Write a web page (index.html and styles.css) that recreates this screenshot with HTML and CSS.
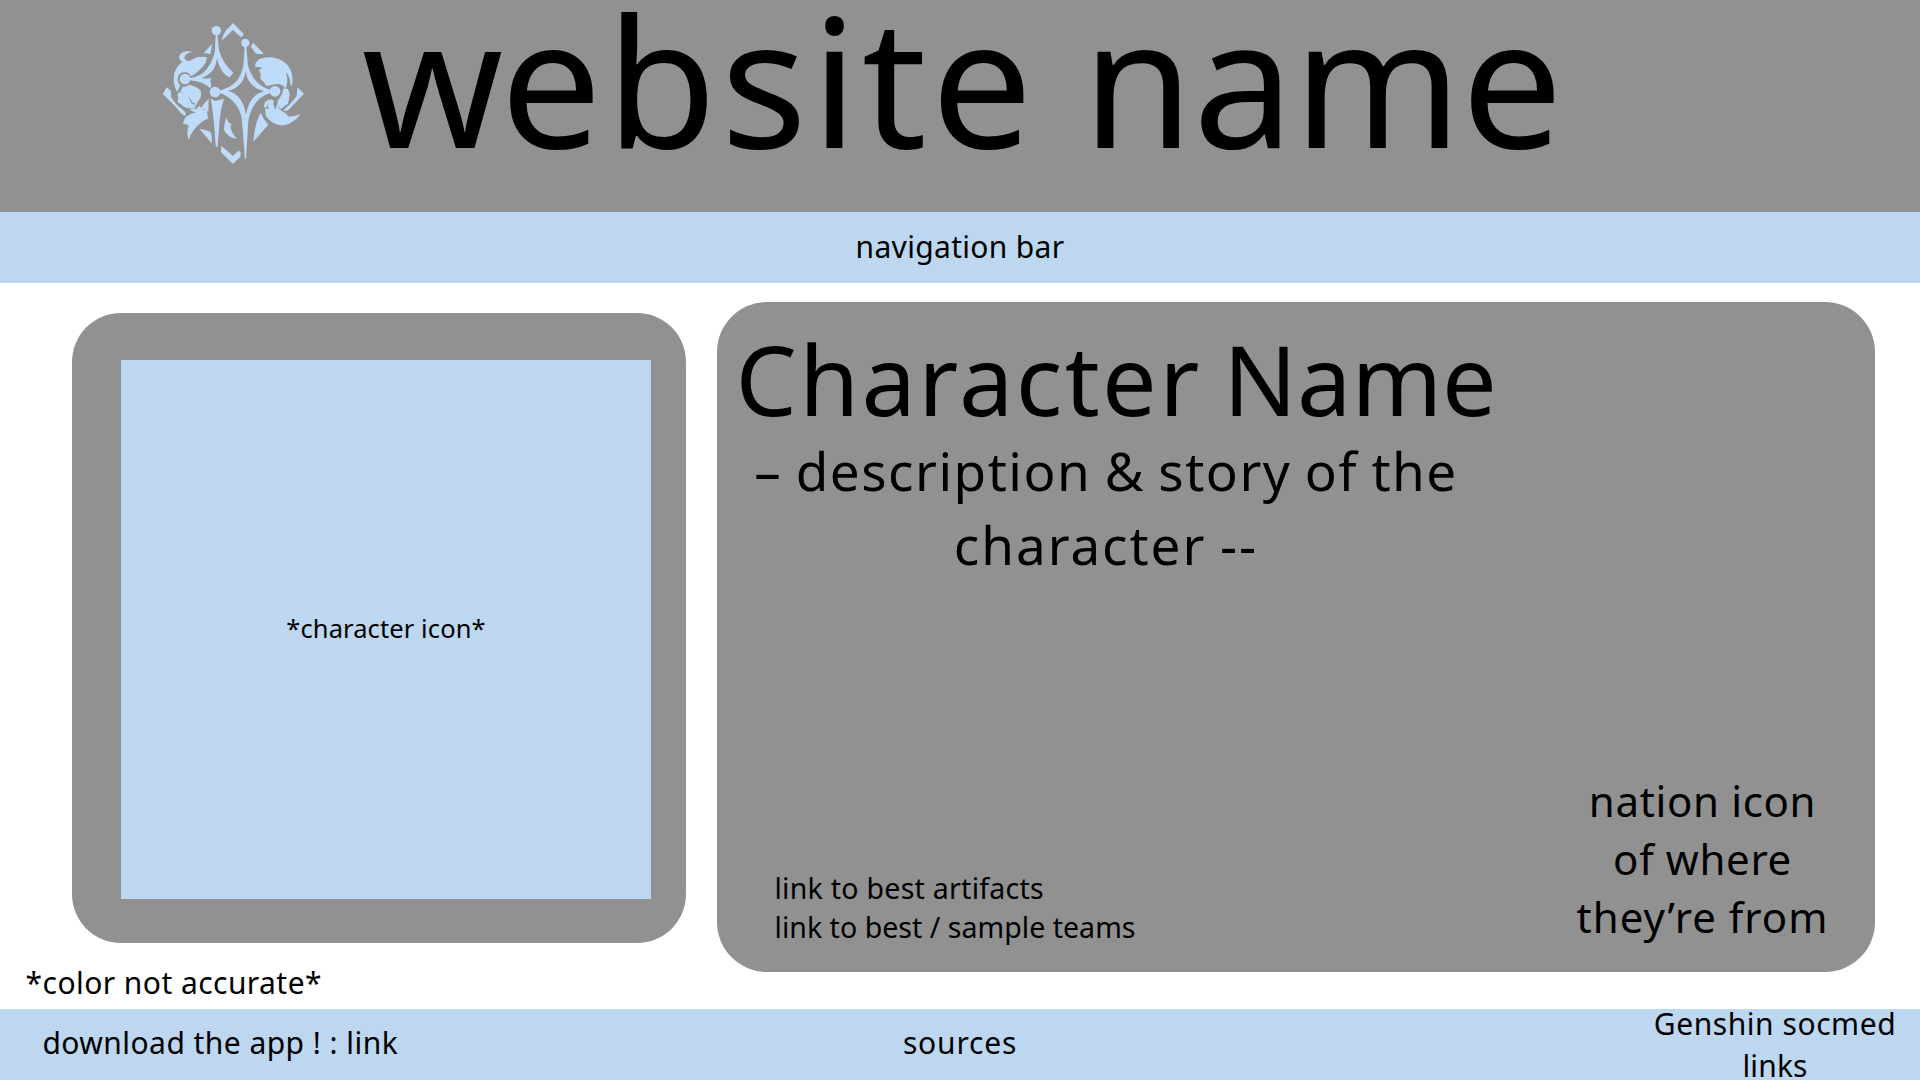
FILE: index.html
```html
<!DOCTYPE html>
<html lang="en">
<head>
<meta charset="utf-8">
<title>website name</title>
<link rel="stylesheet" href="styles.css">
</head>
<body>
<header class="header">
  <svg class="logo" viewBox="0 0 510 495" aria-hidden="true">
    <!-- diamond frame fragments -->
    <path d="M249 39L282 73L273 82L249 60L215 92Q219 73 227 62Z"/>
    <path d="M310 98L341 131Q326 134 317 130L303 111Q304 103 310 98Z"/>
    <path d="M186 102L182 132L161 129Z"/>
    <path d="M51 232L63 243V261Q77 284 100 301Q109 307 107 318L95 312L77 290L38 251Z"/>
    <path d="M442 232L462 251L416 299Q408 306 400 301Q423 282 440 258Z"/>
    <path d="M149 357Q171 359 183 368Q187 382 185 400Z"/>
    <path d="M332 308Q341 330 355 344L310 395Q313 344 332 308Z"/>
    <path d="M214 407L249 438L265 422L272 426L271 440L249 462L213 427Z"/>
    <path d="M229 322Q234 341 245 343L241 349Q244 370 261 387Q231 381 222 360Q222 345 229 322Z"/>
    <!-- left figure -->
    <path d="M130 125Q104 128 103 145Q106 155 120 152L134 145Q151 138 171 142L167 158Q155 177 130 195L122 199Q119 186 103 187Q83 188 83 211Q84 220 91 226L82 245Q66 223 73 189Q81 165 98 155Q84 149 88 137Q96 119 130 125Z"/>
    <path d="M99 230Q109 232 118 224Q139 229 151 240Q156 254 150 267Q144 272 136 291L134 278L127 278Q122 258 91 246Z"/>
    <path d="M87 246Q100 250 112 256Q119 263 124 280L134 285L136 296L119 295Q109 296 99 288Q91 280 82 276Q87 262 82 256Z"/>
    <path d="M176 267L175 306Q167 298 154 293Q164 277 176 267Z"/>
    <path d="M154 273L148 289L163 299L171 303L173 318L176 325Q157 332 139 351Q126 364 116 389Q108 369 116 348L113 344L99 341L104 325Q120 308 138 309L122 301L120 296L137 298Q149 290 154 273Z"/>
    <!-- right figure -->
    <path d="M316 161Q326 139 366 142Q405 148 420 177Q431 199 426 227Q424 229 421 223Q421 202 408 186L412 207Q412 226 406 235L397 226Q386 219 366 225L349 228Q339 212 331 207L332 193Q327 187 328 179L337 174Q326 170 316 172Z"/>
    <path d="M401 235L414 237L419 253Q417 265 414 281Q400 288 394 297L384 289Q378 276 389 264Q398 252 401 235Z"/>
    <path d="M345 276L359 266L356 280L349 293L341 291Z"/>
    <path d="M362 268L371 271Q366 297 390 314Q417 326 452 312Q432 340 402 346Q369 348 348 319Q345 307 346 295L355 297Q352 277 362 268Z"/>
    <path d="M381 283Q384 296 400 306Q410 308 417 326L392 323L374 305Z"/>
    <!-- rear sceptre -->
    <circle cx="199" cy="62" r="14"/>
    <circle cx="105" cy="207" r="16"/>
    <path d="M197 72H202L207 121Q219 162 250 188L239 202Q211 192 201 144Q197 190 154 204Q170 208 185 203Q178 216 184 222Q184 230 180 235Q166 216 117 210V205Q150 202 171 177Q193 143 195 119Z"/>
    <path d="M182 266L196 273L222 266Q211 298 209 330L203 409Q199 413 197 407Q191 309 182 266Z"/>
    <!-- front sceptre -->
    <circle cx="286" cy="99" r="12.500"/>
    <circle cx="195" cy="246" r="16"/>
    <circle cx="375" cy="244" r="16"/>
    <path fill-rule="evenodd" d="M284 108H289L294 167Q311 226 362 240V248Q308 264 295 332L288 447H285Q280 380 275 323Q263 268 207 248V242Q268 229 280 168ZM287 184Q280 232 234 243Q278 253 288 314Q297 254 342 244Q294 232 287 184Z"/>
  </svg>
  <h1 class="site-title"><span class="initial">w</span>ebsite <span class="title-end">name</span></h1>
</header>
<nav class="nav">navigation bar</nav>
<main class="main">
  <section class="portrait-column">
    <div class="portrait-card"><div class="portrait">*character icon*</div></div>
    <p class="note">*color not accurate*</p>
  </section>
  <article class="character-card">
    <div>
      <h2 class="character-name">Character <span class="name-end">Name</span></h2>
      <p class="description">– description &amp; story of the<br><span class="description-end">character --</span></p>
    </div>
    <div class="character-bottom">
      <div class="links">
        <div class="artifacts">link to best artifacts</div>
        <div>link to best / sample teams</div>
      </div>
      <p class="nation">nation icon<br>of where<br><span class="nation-end">they’re from</span></p>
    </div>
  </article>
</main>
<footer class="footer">
  <div class="download">download the app ! : link</div>
  <div class="sources">sources</div>
  <div class="social">Genshin socmed<br><span class="social-end">links</span></div>
</footer>
</body>
</html>
```
FILE: styles.css
```css
* { box-sizing: border-box; margin: 0; }

body {
  width: 1920px;
  height: 1080px;
  overflow: hidden;
  display: flex;
  flex-direction: column;
  background: #fff;
  color: #000;
  font-family: "Noto Sans", sans-serif;
  font-size: 30px;
}

.header {
  height: 212px;
  display: flex;
  align-items: flex-start;
  gap: 41.7px;
  padding-left: 150px;
  background: #919191;
}
.logo {
  width: 170px;
  height: 165px;
  margin-top: 10px;
  fill: #bedcf9;
}
.site-title {
  font-size: 180px;
  font-weight: 400;
  line-height: 158px;
  letter-spacing: 4.2px;
  word-spacing: -5.5px;
  white-space: nowrap;
}
.initial { letter-spacing: -3px; }
.title-end { letter-spacing: -0.5px; }

.nav {
  height: 71px;
  background: #bdd7f1;
  line-height: 69px;
  text-align: center;
  letter-spacing: 0.318px;
}

.main {
  height: 726px;
  display: flex;
  align-items: flex-start;
}
.portrait-column {
  width: 717px;
  padding-top: 30px;
}
.portrait-card {
  width: 613.5px;
  height: 630px;
  margin-left: 72px;
  padding: 47px 34.5px 44px 49px;
  border-radius: 49px;
  background: #919191;
}
.portrait {
  height: 539px;
  display: flex;
  align-items: center;
  justify-content: center;
  padding-bottom: 3px;
  background: #bdd7f1;
  font-size: 25.5px;
  letter-spacing: 0.108px;
}
.note {
  margin-top: 20px;
  padding-left: 25.6px;
  line-height: 40px;
  letter-spacing: 0.441px;
}

.character-card {
  width: 1157.7px;
  height: 670.5px;
  margin-top: 18.5px;
  padding: 21px 42.7px 26px 0;
  display: flex;
  flex-direction: column;
  justify-content: space-between;
  border-radius: 50px;
  background: #919191;
}
.character-name {
  padding-left: 18.5px;
  font-size: 97px;
  font-weight: 400;
  line-height: 111px;
  letter-spacing: 2.4px;
  word-spacing: -6px;
  white-space: nowrap;
}
.name-end { letter-spacing: 0; }
.description {
  width: 778px;
  font-size: 53px;
  line-height: 74px;
  letter-spacing: 1.5px;
  word-spacing: -1.9px;
  text-align: center;
}
.description-end { letter-spacing: 1.95px; }
.character-bottom {
  display: flex;
  align-items: flex-end;
  justify-content: space-between;
  padding-left: 57.5px;
}
.links {
  margin-bottom: -1px;
  font-size: 28.5px;
  line-height: 39px;
  letter-spacing: 0.031px;
}
.artifacts { letter-spacing: 0.267px; }
.nation {
  width: 260px;
  padding-left: 1px;
  font-size: 42px;
  line-height: 58px;
  letter-spacing: 0.65px;
  text-align: center;
}
.nation-end { letter-spacing: 1.006px; }

.footer {
  height: 71px;
  display: grid;
  grid-template-columns: 1fr auto 1fr;
  grid-template-rows: 71px;
  align-items: center;
  padding: 0 20px 0 42.4px;
  background: #bdd7f1;
}
.download {
  padding-bottom: 4px;
  letter-spacing: 0.45px;
}
.sources {
  padding: 0 22.4px 4px 0;
  letter-spacing: 0.805px;
}
.social {
  justify-self: end;
  width: 250px;
  line-height: 42px;
  letter-spacing: 0.548px;
  text-align: center;
}
.social-end { letter-spacing: 0.165px; }
```
